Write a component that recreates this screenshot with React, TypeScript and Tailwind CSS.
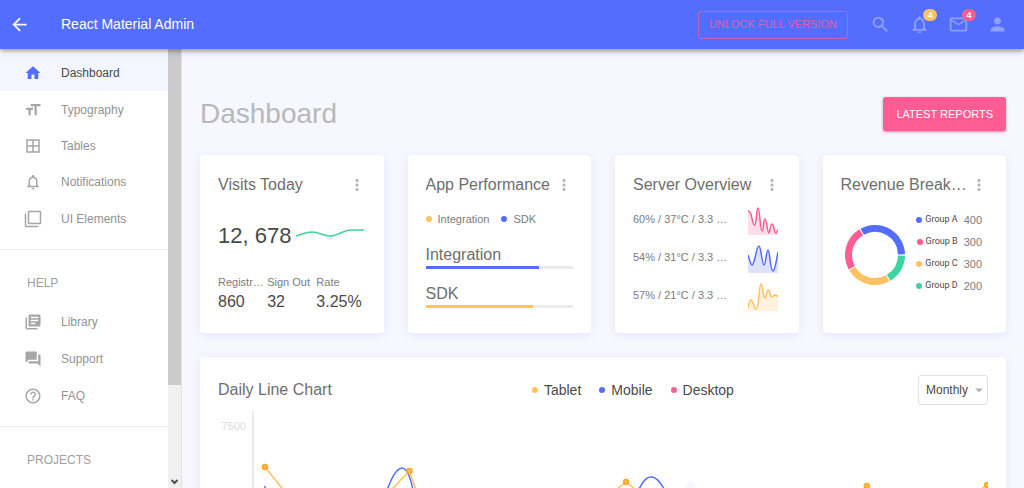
import type { ReactNode } from 'react'
import type { IconType } from 'react-icons'
import {
  MdArrowBack,
  MdArrowDropDown,
  MdBorderAll,
  MdFilterNone,
  MdFormatSize,
  MdHelpOutline,
  MdHome,
  MdLibraryBooks,
  MdMailOutline,
  MdMoreVert,
  MdNotificationsNone,
  MdPerson,
  MdQuestionAnswer,
  MdSearch,
} from 'react-icons/md'

interface NavItem {
  label: string
  icon: IconType
  active?: boolean
}

const mainLinks: NavItem[] = [
  { label: 'Dashboard', icon: MdHome, active: true },
  { label: 'Typography', icon: MdFormatSize },
  { label: 'Tables', icon: MdBorderAll },
  { label: 'Notifications', icon: MdNotificationsNone },
  { label: 'UI Elements', icon: MdFilterNone },
]

const helpLinks: NavItem[] = [
  { label: 'Library', icon: MdLibraryBooks },
  { label: 'Support', icon: MdQuestionAnswer },
  { label: 'FAQ', icon: MdHelpOutline },
]

const visitStats = [
  { label: 'Registrations', value: '860' },
  { label: 'Sign Out', value: '32' },
  { label: 'Rate', value: '3.25%' },
]

const servers = [
  {
    label: '60% / 37°C / 3.3 Ghz',
    color: '#FF5C93',
    path: 'M0 4C4 3 4 18 6.500 18C9 18 8 1 10 1C12 1 12 24 14 24C16 24 15 12 17 12C19 12 19 26 21 26C22 26 22 17 24 17C26 17 26 26 28 26C29 26 29 23 30 23',
  },
  {
    label: '54% / 31°C / 3.3 Ghz',
    color: '#536DFE',
    path: 'M0 10C2 17 3 20 4 20C7 20 8 1 11 1C13 1 14 20 16 20C18 20 18 5 20 5C22 5 22 26 25 26C27 26 29 12 30 7',
  },
  {
    label: '57% / 21°C / 3.3 Ghz',
    color: '#FFC260',
    path: 'M0 25C1 20 2 17 3 17C5 17 6 26 8 26C11 26 11 1 13 1C15 1 15 16 17 15C19 13 19 7 20 7C22 7 22 14 24 14C25 14 26 12 27 12C28 12 29 12 30 14',
  },
]

const revenue = [
  { name: 'Group A', value: 400, color: '#536DFE' },
  { name: 'Group B', value: 300, color: '#FF5C93' },
  { name: 'Group C', value: 300, color: '#FFC260' },
  { name: 'Group D', value: 200, color: '#3CD4A0' },
]

// one value per day, in chart coordinates
const tabletY = [62, 92, 128, 150, 118, 91, 66, 136, 168, 140, 150, 172, 120, 132, 96, 77, 96, 124, 160, 142, 110, 150, 128, 162, 140, 81, 100, 150, 128, 96, 80]

function NavLinks({ items, className }: { items: NavItem[]; className: string }) {
  return (
    <ul className={`grid auto-rows-fr ${className}`}>
      {items.map(({ label, icon: Icon, active }) => (
        <li key={label}>
          <a
            href="#"
            className={`flex h-full items-center gap-[19px] px-6 text-[12px] ${active ? 'bg-[#f3f5ff] text-[#4a4a4a]' : 'text-[#929292]'}`}
          >
            <Icon size={18} className={active ? 'text-[#536dfe]' : 'text-[#a6a6a6]'} />
            {label}
          </a>
        </li>
      ))}
    </ul>
  )
}

function Sidebar() {
  return (
    <aside className="flex w-[182px] shrink-0 bg-white">
      <nav className="min-w-0 flex-1 overflow-hidden pt-1.5">
        <NavLinks items={mainLinks} className="h-[182px]" />
        <hr className="mt-3 border-[#ebebeb]" />
        <h2 className="px-[27px] pt-6 pb-3 text-[12px] leading-[18px] text-[#a0a0a0]">HELP</h2>
        <NavLinks items={helpLinks} className="h-[110px]" />
        <hr className="mt-3 border-[#ebebeb]" />
        <h2 className="px-[27px] pt-6 pb-3 text-[12px] leading-[18px] text-[#a0a0a0]">PROJECTS</h2>
      </nav>
      <div className="flex w-3.5 flex-col border-r border-[#e2e2e2] bg-[#f0f0f0]">
        <div className="grow-[15] bg-[#cbcbcb]" />
        <div className="grow-[4]" />
        <svg viewBox="0 0 13 13" className="h-[13px] w-[13px]" fill="none" stroke="#505050" strokeWidth="2">
          <path d="M3.500 5L6.500 8L9.500 5" />
        </svg>
      </div>
    </aside>
  )
}

function Badge({ className, children }: { className: string; children: ReactNode }) {
  return (
    <span className={`absolute -top-[5px] left-3.5 h-3 w-3.5 rounded-full text-center text-[9px] leading-3 font-bold text-white ${className}`}>
      {children}
    </span>
  )
}

function Header() {
  return (
    <header className="relative z-10 flex h-[49px] shrink-0 items-center bg-[#536dfe] pr-4 pl-[9px] text-white shadow-[0_2px_4px_rgba(0,0,0,0.3),0_3px_8px_rgba(0,0,0,0.12)]">
      <button aria-label="Collapse menu">
        <MdArrowBack size={21} />
      </button>
      <h1 className="ml-[31px] flex-1 text-[14px]">React Material Admin</h1>
      <a href="#" className="mr-[22px] flex h-7 items-center rounded-[3px] border border-[#c462bd] px-[10px] text-[11px] text-[#ff5c93]/80">
        UNLOCK FULL VERSION
      </a>
      <div className="flex gap-[18px] text-white/35">
        <button aria-label="Search">
          <MdSearch size={21} />
        </button>
        <button aria-label="Notifications" className="relative">
          <MdNotificationsNone size={21} />
          <Badge className="bg-[#ffc260]">4</Badge>
        </button>
        <button aria-label="Messages" className="relative">
          <MdMailOutline size={21} />
          <Badge className="bg-[#ff5c93]">4</Badge>
        </button>
        <button aria-label="Account">
          <MdPerson size={21} />
        </button>
      </div>
    </header>
  )
}

function Card({ title, children }: { title: string; children: ReactNode }) {
  return (
    <section className="min-h-[178px] min-w-0 rounded-[4px] bg-white px-[18px] pt-[19px] pb-[15px] shadow-[0_2px_9px_#e4e6fa]">
      <div className="flex items-center">
        <h3 className="min-w-0 flex-1 truncate text-[16px] leading-[22px] text-[#6e6e6e]">{title}</h3>
        <button aria-label={`${title} options`} className="text-[#b0b0b0]">
          <MdMoreVert size={18} />
        </button>
      </div>
      {children}
    </section>
  )
}

function Dot({ color }: { color: string }) {
  return <span className="h-1.5 w-1.5 shrink-0 rounded-full" style={{ backgroundColor: color }} />
}

function Progress({ label, value, color }: { label: string; value: number; color: string }) {
  return (
    <div>
      <p className="text-[16px] leading-[22px] text-[#6e6e6e]">{label}</p>
      <div className="h-[3px] bg-[#ebebeb]">
        <div className="h-full" style={{ width: `${value}%`, backgroundColor: color }} />
      </div>
    </div>
  )
}

function RevenueDonut() {
  const total = revenue.reduce((sum, r) => sum + r.value, 0)
  let start = 0
  const arcs = revenue.map(r => {
    const from = ((start + 4) / total) * Math.PI * 2
    start += r.value
    const to = ((start - 4) / total) * Math.PI * 2
    const point = (a: number) => `${30 + 26.5 * Math.cos(a)} ${30 - 26.5 * Math.sin(a)}`
    return { color: r.color, d: `M${point(from)}A26.5 26.5 0 0 0 ${point(to)}` }
  })

  return (
    <svg viewBox="0 0 60 60" className="mt-1 h-[60px] w-[60px] shrink-0" fill="none" strokeWidth="7">
      {arcs.map(a => (
        <path key={a.color} d={a.d} stroke={a.color} />
      ))}
    </svg>
  )
}

function LineChart() {
  const step = 24.07
  const tablet = tabletY.map((y, i) => [47 + i * step, y])

  return (
    <svg viewBox="0 0 770 240" className="block w-full" fill="none">
      <path d="M47 240V150L120 170L230 140L330 180L430 130C458 110 466 76 473 76C480 76 488 110 510 130L620 160L769 130V240Z" fill="#f6f7ff" />
      <path d="M35 6V200H770" stroke="#e3e3e3" strokeWidth="1.500" />
      <text x="28" y="25" textAnchor="end" fontSize="11" fill="#dcdcdc">
        7500
      </text>
      <path
        d="M47 81C48 130 60 160 71 150S95 110 119 140S150 150 160 110C170 82 176 63 184 63C193 63 196 90 203 130S230 170 260 150S300 130 330 160S380 150 409 108C419 90 424 72 433 72C443 72 448 90 460 108S490 160 520 140S580 120 620 150S700 130 769 150"
        stroke="#536dfe"
        strokeWidth="1.500"
      />
      <polyline points={tablet.map(p => p.join(',')).join(' ')} stroke="#ffc260" strokeWidth="1.500" />
      {tablet.map(([x, y]) => (
        <circle key={x} cx={x} cy={y} r="2.500" stroke="#ffa726" strokeWidth="1.500" fill="#ffb84d" />
      ))}
    </svg>
  )
}

export default function App() {
  return (
    <div className="flex h-screen flex-col overflow-hidden bg-[#f6f7ff] font-['Liberation_Sans',Arial,sans-serif]">
      <Header />
      <div className="flex min-h-0 flex-1">
        <Sidebar />
        <main className="min-w-0 flex-1 overflow-hidden px-[18px] pt-12">
          <div className="mb-6 flex items-center justify-between">
            <h2 className="text-[28px] leading-[34px] text-[#b9b9b9]">Dashboard</h2>
            <button className="h-[34px] rounded-[3px] bg-[#ff5c93] px-[13px] text-[11px] text-white shadow-[0_1px_3px_rgba(0,0,0,0.35)]">
              LATEST REPORTS
            </button>
          </div>

          <div className="mb-6 grid grid-cols-4 gap-6">
            <Card title="Visits Today">
              <div className="mt-[26px] flex items-center gap-1">
                <span className="shrink-0 text-[22px] leading-7 text-[#4a4a4a]">12, 678</span>
                <svg viewBox="0 0 70 20" className="min-w-0 flex-1" fill="none" stroke="#3cd4a0" strokeWidth="1.500">
                  <path d="M1 10C8 8 12 6 17 6C24 6 28 10 35 10C43 10 48 4 56 4H69" />
                </svg>
              </div>
              <dl className="mt-6 grid grid-cols-3">
                {visitStats.map(s => (
                  <div key={s.label} className="min-w-0">
                    <dt className="truncate pr-0.5 text-[11px] leading-4 text-[#7c7c7c]">{s.label}</dt>
                    <dd className="text-[16px] leading-6 text-[#4a4a4a]">{s.value}</dd>
                  </div>
                ))}
              </dl>
            </Card>

            <Card title="App Performance">
              <div className="my-[15px] flex gap-3 text-[11px] leading-4 text-[#7c7c7c]">
                <span className="flex items-center gap-1.5">
                  <Dot color="#FFC260" />
                  Integration
                </span>
                <span className="flex items-center gap-1.5">
                  <Dot color="#536DFE" />
                  SDK
                </span>
              </div>
              <div className="grid gap-3.5 pt-0.5">
                <Progress label="Integration" value={77} color="#536DFE" />
                <Progress label="SDK" value={73} color="#FFC260" />
              </div>
            </Card>

            <Card title="Server Overview">
              <div className="mt-[11px] flex flex-col gap-2.5">
                {servers.map(s => (
                  <div key={s.label} className="flex gap-4 pr-[3px]">
                    <p className="min-w-0 flex-1 truncate text-[11px] leading-6 text-[#7c7c7c]">{s.label}</p>
                    <svg viewBox="0 0 30 28" className="h-7 w-[30px] shrink-0" fill="none">
                      <path d={`${s.path}V28H0Z`} fill={s.color} fillOpacity="0.2" />
                      <path d={s.path} stroke={s.color} strokeWidth="1.500" />
                    </svg>
                  </div>
                ))}
              </div>
            </Card>

            <Card title="Revenue Breakdown">
              <div className="mt-[13px] flex items-center justify-between pr-[6px] pl-1">
                <RevenueDonut />
                <ul>
                  {revenue.map(r => (
                    <li key={r.name} className="flex h-[22px] items-center justify-end">
                      <Dot color={r.color} />
                      <span className="ml-[3px] font-['Roboto',sans-serif] text-[9px] text-[#4a4a4a]">{r.name}</span>
                      <span className="ml-1.5 text-[11px] text-[#7c7c7c]">{r.value}</span>
                    </li>
                  ))}
                </ul>
              </div>
            </Card>
          </div>

          <section className="rounded-[4px] bg-white p-[18px] shadow-[0_2px_9px_#e4e6fa]">
            <div className="flex items-center justify-between">
              <h3 className="text-[16px] text-[#6e6e6e]">Daily Line Chart</h3>
              <div className="flex gap-[18px] pl-4 text-[14px] text-[#4a4a4a]">
                <span className="flex items-center gap-1.5">
                  <Dot color="#FFC260" />
                  Tablet
                </span>
                <span className="flex items-center gap-1.5">
                  <Dot color="#536DFE" />
                  Mobile
                </span>
                <span className="flex items-center gap-1.5">
                  <Dot color="#FF5C93" />
                  Desktop
                </span>
              </div>
              <div className="relative">
                <select
                  aria-label="Period"
                  className="block h-[30px] w-[70px] appearance-none rounded-[3px] border border-[#e0e0e0] bg-white pl-[7px] text-[12px] text-[#4a4a4a]"
                >
                  <option>Monthly</option>
                  <option>Weekly</option>
                  <option>Daily</option>
                </select>
                <MdArrowDropDown size={18} className="pointer-events-none absolute top-1.5 right-0 text-[#b0b0b0]" />
              </div>
            </div>
            <LineChart />
          </section>
        </main>
      </div>
    </div>
  )
}
